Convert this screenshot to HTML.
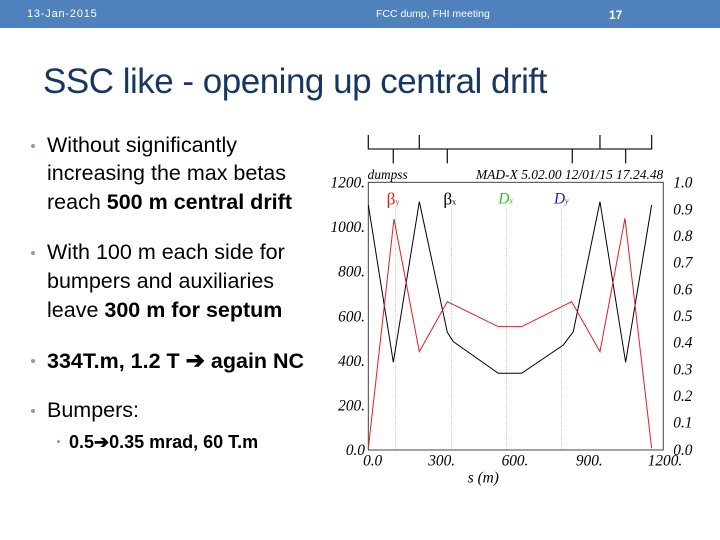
<!DOCTYPE html>
<html><head><meta charset="utf-8"><style>
body{margin:0;width:720px;height:540px;background:#fff;position:relative;overflow:hidden;font-family:"Liberation Sans",sans-serif}
.bar{position:absolute;left:0;top:0;width:720px;height:28px;background:#4f81bd;color:#fff;font-size:11px}
.bar span{position:absolute;top:8px}
.t{position:absolute;left:43px;top:62px;font-size:35px;color:#17375e;letter-spacing:-0.5px;white-space:nowrap}
.l{position:absolute;left:47px;font-size:21.5px;color:#000;white-space:nowrap;line-height:24px}
.d{position:absolute;width:4px;height:4px;border-radius:2px;background:#7f9dc0}
</style></head><body>
<div class="bar"><span style="left:27px;letter-spacing:0.8px">13-Jan-2015</span><span style="left:376px;font-size:10.5px">FCC dump, FHI meeting</span><span style="left:609px;font-weight:bold;font-size:12px">17</span></div>
<div class="t">SSC like - opening up central drift</div>
<div class="d" style="left:31px;top:144px"></div>
<div class="l" style="top:133px">Without significantly</div>
<div class="l" style="top:161px">increasing the max betas</div>
<div class="l" style="top:190px">reach <b>500 m central drift</b></div>
<div class="d" style="left:31px;top:251px"></div>
<div class="l" style="top:240px">With 100 m each side for</div>
<div class="l" style="top:269px">bumpers and auxiliaries</div>
<div class="l" style="top:298px">leave <b>300 m for septum</b></div>
<div class="d" style="left:31px;top:359px"></div>
<div class="l" style="top:348px"><b>334T.m, 1.2 T <span style="font-size:23px">➔</span> again NC</b></div>
<div class="d" style="left:31px;top:409px"></div>
<div class="l" style="top:398px">Bumpers:</div>
<div class="d" style="left:57px;top:440px;width:3px;height:3px"></div>
<div class="l" style="top:430px;left:69px;font-size:18px"><b>0.5➔0.35 mrad, 60 T.m</b></div>
<svg width="720" height="540" style="position:absolute;left:0;top:0">
<g transform="translate(310,125) scale(0.3333)" font-family="Liberation Serif,serif" font-style="italic" fill="#000">
<g stroke="#222" stroke-width="4" fill="none">
<path d="M175 30V72H1025V30M328 30V72M870 30V72M250 72V115M412 72V115M787 72V115M947 72V115"/>
</g>
<rect x="175" y="172" width="885" height="803" fill="none" stroke="#444" stroke-width="3"/>
<g stroke="#aaa" stroke-width="2" stroke-dasharray="3,4">
<path d="M257 250V975M425 250V975M590 250V975M755 250V975"/>
</g>
<path d="M175 240L250 712L328 230L412 622L430 650L565 745L635 745L760 660L790 620L870 230L947 712L1025 240" stroke="#000" stroke-width="3" fill="none"/>
<path d="M175 970L252 282L328 680L412 530L565 605L635 605L785 530L870 680L945 280L1025 970" stroke="#e02020" stroke-width="3" fill="none"/>
<g font-size="46" text-anchor="end">
<text x="165" y="188">1200.</text><text x="165" y="321">1000.</text><text x="165" y="455">800.</text><text x="165" y="589">600.</text><text x="165" y="723">400.</text><text x="165" y="856">200.</text><text x="165" y="990">0.0</text>
</g>
<g font-size="46">
<text x="1090" y="188">1.0</text><text x="1090" y="268">0.9</text><text x="1090" y="348">0.8</text><text x="1090" y="428">0.7</text><text x="1090" y="508">0.6</text><text x="1090" y="588">0.5</text><text x="1090" y="668">0.4</text><text x="1090" y="748">0.3</text><text x="1090" y="828">0.2</text><text x="1090" y="908">0.1</text><text x="1090" y="990">0.0</text>
</g>
<g font-size="46" text-anchor="middle">
<text x="188" y="1022">0.0</text><text x="395" y="1022">300.</text><text x="615" y="1022">600.</text><text x="838" y="1022">900.</text><text x="1065" y="1022">1200.</text>
<text x="520" y="1072">s (m)</text>
</g>
<text x="173" y="162" font-size="40">dumpss</text>
<text x="498" y="162" font-size="40" textLength="562" lengthAdjust="spacingAndGlyphs">MAD-X 5.02.00  12/01/15 17.24.48</text>
<text x="230" y="238" font-size="52" fill="#e02020" font-style="normal">β<tspan font-size="24">y</tspan></text>
<text x="400" y="238" font-size="52" font-style="normal">β<tspan font-size="24">x</tspan></text>
<text x="565" y="235" font-size="46" fill="#2ec02e">D<tspan font-size="24">x</tspan></text>
<text x="732" y="235" font-size="46" fill="#2020b0">D<tspan font-size="24">y</tspan></text>
</g>
</svg>
</body></html>
